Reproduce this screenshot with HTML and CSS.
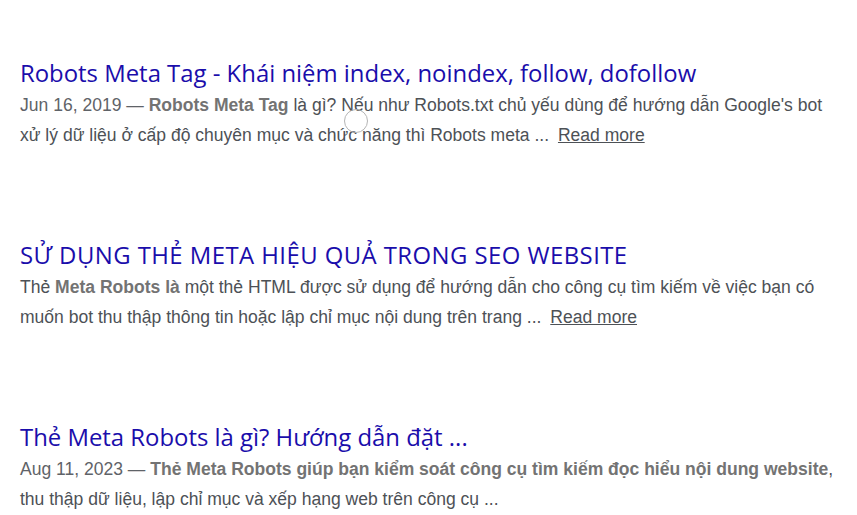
FILE: index.html
```html
<!DOCTYPE html>
<html lang="vi">
<head>
<meta charset="utf-8">
<title>Robots Meta Tag</title>
<link rel="stylesheet" href="styles.css">
</head>
<body>
<main class="results">
  <div class="result">
    <a class="title" href="#">Robots Meta Tag - Khái niệm index, noindex, follow, dofollow</a>
    <p class="snippet"><span class="date">Jun 16, 2019 — </span><b>Robots Meta Tag</b> là gì? Nếu như Robots.txt chủ yếu dùng để hướng dẫn Google's bot xử lý dữ liệu ở cấp độ chuyên mục và chức năng thì Robots meta ... <a class="more" href="#">Read more</a></p>
    <span class="spinner"></span>
  </div>
  <div class="result">
    <a class="title caps" href="#">SỬ DỤNG THẺ META HIỆU QUẢ TRONG SEO WEBSITE</a>
    <p class="snippet">Thẻ <b>Meta Robots là</b> một thẻ HTML được sử dụng để hướng dẫn cho công cụ tìm kiếm về việc bạn có muốn bot thu thập thông tin hoặc lập chỉ mục nội dung trên trang ... <a class="more" href="#">Read more</a></p>
  </div>
  <div class="result">
    <a class="title" href="#">Thẻ Meta Robots là gì? Hướng dẫn đặt ...</a>
    <p class="snippet"><span class="date">Aug 11, 2023 — </span><b>Thẻ Meta Robots giúp bạn kiểm soát công cụ tìm kiếm đọc hiểu nội dung website</b>, thu thập dữ liệu, lập chỉ mục và xếp hạng web trên công cụ ...</p>
  </div>
</main>
</body>
</html>
```

FILE: styles.css
```css
html, body {
  margin: 0;
  padding: 0;
  background: #fff;
}

.results {
  padding: 56px 0 0 20px;
  width: 816px;
  display: flex;
  flex-direction: column;
  gap: 88px;
}

.result {
  position: relative;
}

.title {
  display: block;
  font-family: "Open Sans", Roboto, sans-serif;
  font-size: 23.9px;
  line-height: 34px;
  color: #1a0dab;
  text-decoration: none;
  white-space: nowrap;
}

.title.caps {
  letter-spacing: 0.45px;
}

.snippet {
  margin: 0;
  font-family: "Liberation Sans", Arial, sans-serif;
  font-size: 17.55px;
  line-height: 30px;
  color: #4d5156;
}

.snippet b {
  color: #737373;
  font-weight: bold;
}

.date {
  color: #5f6368;
}

.more {
  color: #4d5156;
  text-decoration: underline;
  margin-left: 4px;
}

/* small loading ring resting over the first snippet */
.spinner {
  position: absolute;
  left: 324px;
  top: 53px;
  width: 22px;
  height: 22px;
  border: 1px solid #b5b5b5;
  border-radius: 50%;
  pointer-events: none;
}
```
